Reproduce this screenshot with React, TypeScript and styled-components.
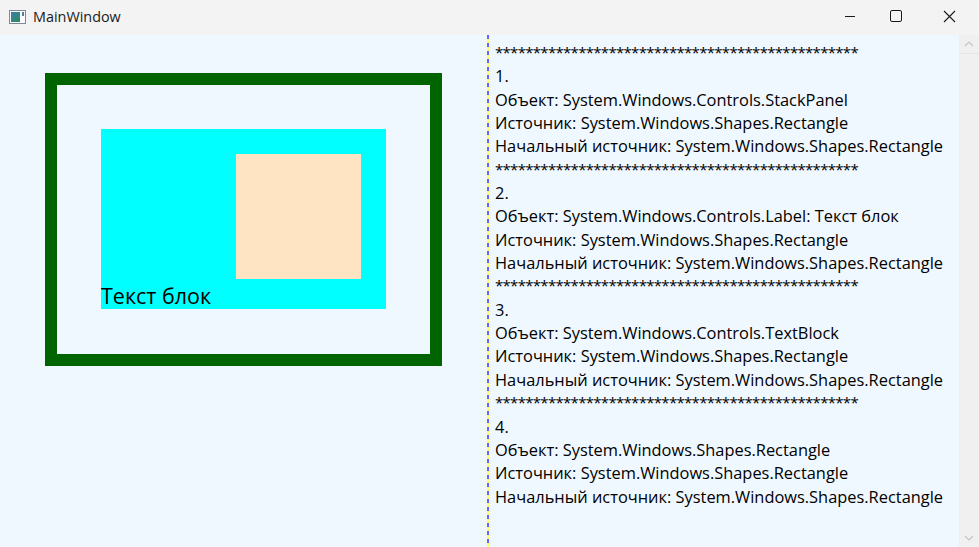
import React from 'react'
import styled, { createGlobalStyle } from 'styled-components'

const GlobalStyle = createGlobalStyle`
  html, body {
    margin: 0;
    padding: 0;
    background: #f0f8ff;
  }
  * {
    box-sizing: border-box;
  }
`

const Window = styled.div`
  width: 979px;
  height: 547px;
  display: flex;
  flex-direction: column;
  overflow: hidden;
  font-family: 'Open Sans', 'Noto Sans', sans-serif;
`

const TitleBar = styled.div`
  height: 35px;
  flex-shrink: 0;
  background: #f3f3f3;
  display: flex;
  align-items: center;
`

const AppIcon = styled.div`
  width: 33px;
  display: flex;
  justify-content: center;
  padding-left: 1px;
  margin-top: -2px;
`

const Caption = styled.span`
  flex: 1;
  font-size: 14.4px;
  color: #1a1a1a;
  margin-top: -3px;
`

const CaptionButton = styled.div<{ $wide?: boolean }>`
  width: ${(p) => (p.$wide ? '60px' : '46px')};
  height: 35px;
  display: flex;
  align-items: center;
  justify-content: center;
  margin-top: -3px;
`

const Client = styled.div`
  flex: 1;
  display: flex;
  background: #f0f8ff;
`

const LeftPane = styled.div`
  width: 487px;
  padding: 38px 0 0 45px;
`

const Frame = styled.div`
  width: 397px;
  height: 293px;
  border: 12px solid #006400;
  padding: 44px 0 0 44px;
`

const Board = styled.div`
  width: 285px;
  height: 180px;
  background: #00ffff;
  display: grid;
  grid-template-areas: 'cell';
`

const Square = styled.div`
  grid-area: cell;
  width: 125px;
  height: 125px;
  margin: 25px 0 0 135px;
  background: #ffe4c4;
`

const BoardText = styled.span`
  grid-area: cell;
  align-self: end;
  font-size: 21.5px;
  line-height: 27px;
  color: #000;
`

const Splitter = styled.div`
  width: 2px;
  background: repeating-linear-gradient(
    to bottom,
    #6464ff 0px,
    #6464ff 4px,
    #ffff64 4px,
    #ffff64 8px
  );
`

const Log = styled.div`
  flex: 1;
  padding: 6px 0 0 6px;
  font-size: 16.4px;
  line-height: 23.35px;
  color: #000;
  white-space: nowrap;
`

const Stars = styled.div`
  letter-spacing: -0.7px;
  font-size: 15px;
`

const ScrollBar = styled.div`
  width: 20px;
  background: #f0f0f0;
  display: flex;
  flex-direction: column;
  justify-content: space-between;
`

const ScrollButton = styled.div<{ $top?: boolean }>`
  height: 19px;
  display: flex;
  align-items: center;
  justify-content: center;
  border-bottom: ${(p) => (p.$top ? '1px solid #e6e6e6' : 'none')};
`

const entries = [
  'System.Windows.Controls.StackPanel',
  'System.Windows.Controls.Label: Текст блок',
  'System.Windows.Controls.TextBlock',
  'System.Windows.Shapes.Rectangle',
]

const STARS = '*'.repeat(48)

const App: React.FC = () => {
  return (
    <Window>
      <GlobalStyle />
      <TitleBar>
        <AppIcon>
          <svg width="17" height="14" viewBox="0 0 17 14">
            <rect x="0.5" y="0.5" width="16" height="13" fill="#fafafa" stroke="#7a8a99" />
            <defs>
              <linearGradient id="ic" x1="0" y1="0" x2="1" y2="1">
                <stop offset="0" stopColor="#3a7fb0" />
                <stop offset="1" stopColor="#2f8a5a" />
              </linearGradient>
            </defs>
            <rect x="2" y="2" width="9" height="10" fill="url(#ic)" />
            <rect x="13" y="2" width="2" height="4" fill="#5a7d9a" />
          </svg>
        </AppIcon>
        <Caption>MainWindow</Caption>
        <CaptionButton>
          <svg width="12" height="12" viewBox="0 0 12 12">
            <line x1="1" y1="6.5" x2="11" y2="6.5" stroke="#1a1a1a" strokeWidth="1" />
          </svg>
        </CaptionButton>
        <CaptionButton>
          <svg width="12" height="12" viewBox="0 0 12 12">
            <rect x="0.5" y="0.5" width="11" height="11" rx="1.5" fill="none" stroke="#1a1a1a" />
          </svg>
        </CaptionButton>
        <CaptionButton $wide>
          <svg width="13" height="13" viewBox="0 0 13 13">
            <path d="M1 1 L12 12 M12 1 L1 12" stroke="#1a1a1a" strokeWidth="1.1" />
          </svg>
        </CaptionButton>
      </TitleBar>
      <Client>
        <LeftPane>
          <Frame>
            <Board>
              <Square />
              <BoardText>Текст блок</BoardText>
            </Board>
          </Frame>
        </LeftPane>
        <Splitter />
        <Log>
          {entries.map((obj, i) => (
            <React.Fragment key={i}>
              <Stars>{STARS}</Stars>
              <div>{i + 1}.</div>
              <div>Объект: {obj}</div>
              <div>Источник: System.Windows.Shapes.Rectangle</div>
              <div>Начальный источник: System.Windows.Shapes.Rectangle</div>
            </React.Fragment>
          ))}
        </Log>
        <ScrollBar>
          <ScrollButton $top>
            <svg width="10" height="6" viewBox="0 0 10 6">
              <path d="M1 5 L5 1 L9 5" fill="none" stroke="#c4c4c4" strokeWidth="1.2" />
            </svg>
          </ScrollButton>
          <ScrollButton>
            <svg width="10" height="6" viewBox="0 0 10 6">
              <path d="M1 1 L5 5 L9 1" fill="none" stroke="#c4c4c4" strokeWidth="1.2" />
            </svg>
          </ScrollButton>
        </ScrollBar>
      </Client>
    </Window>
  )
}

export default App
